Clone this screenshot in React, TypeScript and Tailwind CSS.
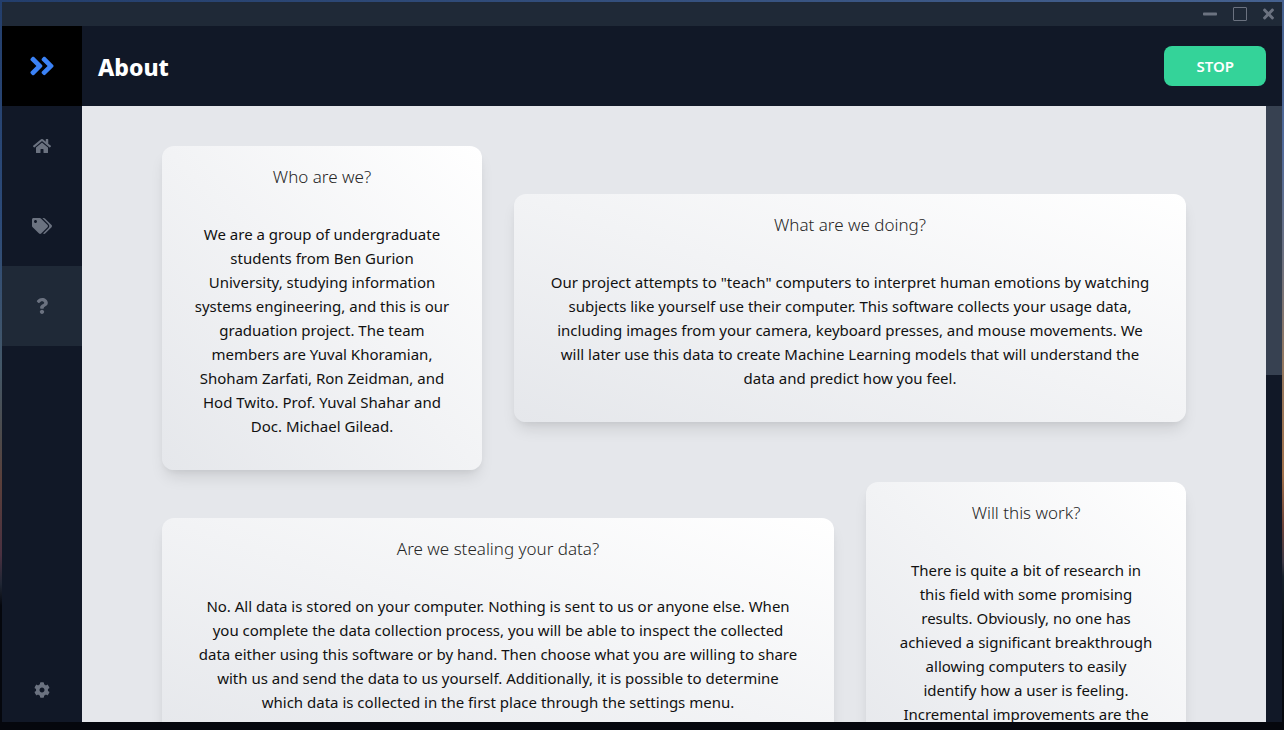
import React from "react";
import {
  FaAngleDoubleRight,
  FaCog,
  FaHome,
  FaMinus,
  FaQuestion,
  FaTags,
  FaTimes,
} from "react-icons/fa";

type CardData = { title: string; lines: string[]; className: string };

const cards: CardData[] = [
  {
    title: "Who are we?",
    className: "col-span-1",
    lines: [
      "We are a group of undergraduate",
      "students from Ben Gurion",
      "University, studying information",
      "systems engineering, and this is our",
      "graduation project. The team",
      "members are Yuval Khoramian,",
      "Shoham Zarfati, Ron Zeidman, and",
      "Hod Twito. Prof. Yuval Shahar and",
      "Doc. Michael Gilead.",
    ],
  },
  {
    title: "What are we doing?",
    className: "col-span-2",
    lines: [
      'Our project attempts to "teach" computers to interpret human emotions by watching',
      "subjects like yourself use their computer. This software collects your usage data,",
      "including images from your camera, keyboard presses, and mouse movements. We",
      "will later use this data to create Machine Learning models that will understand the",
      "data and predict how you feel.",
    ],
  },
  {
    title: "Are we stealing your data?",
    className: "col-span-2",
    lines: [
      "No. All data is stored on your computer. Nothing is sent to us or anyone else. When",
      "you complete the data collection process, you will be able to inspect the collected",
      "data either using this software or by hand. Then choose what you are willing to share",
      "with us and send the data to us yourself. Additionally, it is possible to determine",
      "which data is collected in the first place through the settings menu.",
    ],
  },
  {
    title: "Will this work?",
    className: "col-span-1 min-h-[300px]",
    lines: [
      "There is quite a bit of research in",
      "this field with some promising",
      "results. Obviously, no one has",
      "achieved a significant breakthrough",
      "allowing computers to easily",
      "identify how a user is feeling.",
      "Incremental improvements are the",
    ],
  },
];

function Card({ title, lines, className }: CardData) {
  return (
    <article
      className={`rounded-xl bg-linear-to-tr from-[#e5e7eb] to-white pt-4 pb-8 text-center shadow-[0_10px_15px_-3px_rgba(0,0,0,0.1),0_4px_6px_-2px_rgba(0,0,0,0.05)] ${className}`}
    >
      <h2 className="text-[17px] leading-[30px] font-light text-[#262626]">{title}</h2>
      <p className="mt-[30px] text-[15px] leading-6 whitespace-pre text-[#111111]">{lines.join("\n")}</p>
    </article>
  );
}

function NavLink({
  label,
  active,
  className = "h-20",
  children,
}: {
  label: string;
  active?: boolean;
  className?: string;
  children: React.ReactNode;
}) {
  return (
    <a
      href="#"
      aria-label={label}
      aria-current={active ? "page" : undefined}
      className={`flex items-center justify-center text-[#6b7280] ${active ? "bg-[#1f2937]" : ""} ${className}`}
    >
      {children}
    </a>
  );
}

export default function App() {
  return (
    <div className="flex h-screen bg-[#05070d] font-['Noto_Sans','Open_Sans',sans-serif]">
      <div className="w-[2px] shrink-0 bg-[linear-gradient(to_bottom,#233e6c_0%,#2c4a78_30%,#435768_50%,#4d4a4a_60%,#5b3f3a_66%,#4a3040_76%,#1f2634_80%,#05070d_83%,#05070d_100%)]" />
      <div className="flex min-w-0 flex-1 flex-col pb-2">
        <div className="h-[2px] shrink-0 bg-[linear-gradient(to_right,#233e6c,#45618f)]" />
        <div className="flex h-6 shrink-0 items-center justify-end gap-4 bg-[#1f2937] pr-2 text-[#6b7280]">
          <button type="button" aria-label="Minimize">
            <FaMinus className="h-4 w-[14px]" />
          </button>
          <button
            type="button"
            aria-label="Maximize"
            className="size-[14px] rounded-[1px] border border-[#6b7280]"
          />
          <button type="button" aria-label="Close">
            <FaTimes className="h-4 w-[11px]" />
          </button>
        </div>
        <div className="flex min-h-0 flex-1">
          <nav className="flex w-20 shrink-0 flex-col bg-[#111827]">
            <button
              type="button"
              aria-label="Expand menu"
              className="flex h-20 items-center justify-center bg-black text-[#3b82f6]"
            >
              <FaAngleDoubleRight className="h-[30px] w-[26px]" />
            </button>
            <NavLink label="Home">
              <FaHome className="h-4 w-[18px]" />
            </NavLink>
            <NavLink label="Tags">
              <FaTags className="h-4 w-5" />
            </NavLink>
            <NavLink label="About" active>
              <FaQuestion className="h-4 w-3" />
            </NavLink>
            <NavLink label="Settings" className="mt-auto h-16">
              <FaCog className="size-4" />
            </NavLink>
          </nav>
          <div className="flex min-w-0 flex-1 flex-col">
            <header className="flex h-20 shrink-0 items-center justify-between bg-[#111827] px-4">
              <h1 className="pt-0.5 text-[23px] leading-8 font-extrabold text-white">About</h1>
              <button
                type="button"
                className="h-10 rounded-lg bg-[#34d399] px-8 text-[15px] font-semibold text-white"
              >
                STOP
              </button>
            </header>
            <div className="flex min-h-0 flex-1">
              <main className="min-w-0 flex-1 overflow-y-auto bg-[#e5e7eb] px-20 py-10 [scrollbar-width:none]">
                <div className="grid grid-cols-3 items-center gap-x-8 gap-y-3">
                  {cards.map((card) => (
                    <Card key={card.title} {...card} />
                  ))}
                </div>
              </main>
              <div className="w-4 shrink-0 bg-[#111827]">
                <div className="h-[269px] bg-[#374151]" />
              </div>
            </div>
          </div>
        </div>
      </div>
      <div className="w-[2px] shrink-0 bg-[linear-gradient(to_bottom,#45618f_0%,#506a9a_20%,#6b7080_35%,#94785f_50%,#a0704a_65%,#6b4238_72%,#3c3844_77%,#16202a_79%,#0a0f16_86%,#05070d_100%)]" />
    </div>
  );
}
